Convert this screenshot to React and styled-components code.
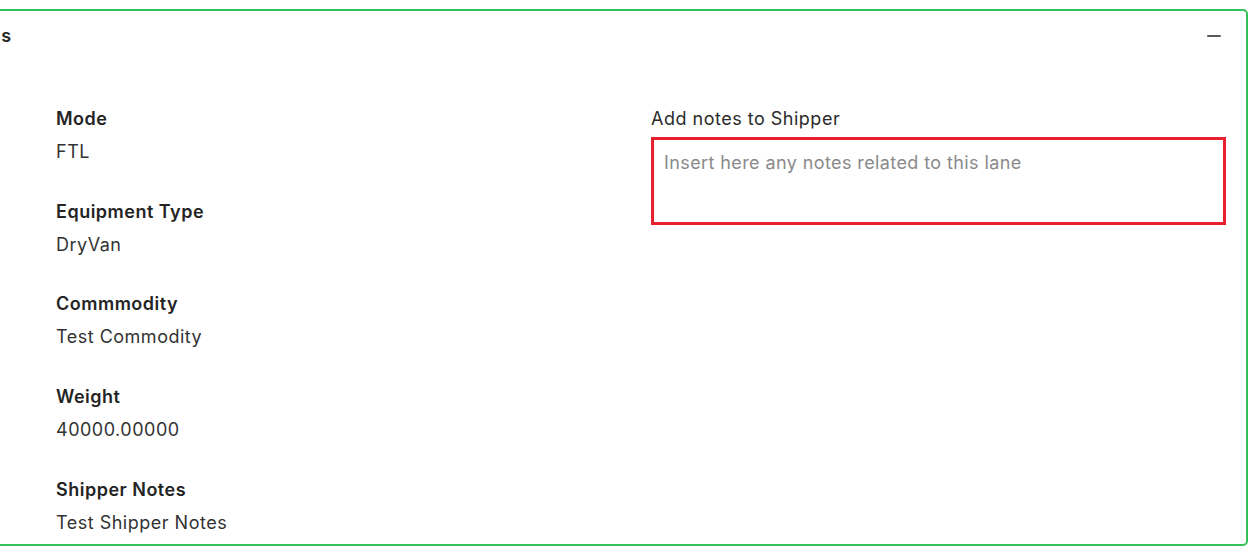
import React from "react";
import styled, { createGlobalStyle } from "styled-components";

const Global = createGlobalStyle`
  html, body { margin: 0; padding: 0; background: #fff; overflow: hidden; }
  body { font-family: Inter, "Noto Sans", "Liberation Sans", sans-serif; color: #2b2b2b; }
`;

const Page = styled.div`
  padding: 9px 9px 0 0;
`;

const Card = styled.section`
  margin-left: -106px;
  border: 2px solid #34c157;
  border-radius: 5px;
  height: 537px;
  box-sizing: border-box;
`;

const Header = styled.div`
  display: flex;
  align-items: center;
  justify-content: space-between;
  height: 49px;
  padding: 0 19px 0 2px;
`;

const Title = styled.h2`
  margin: 0;
  font-size: 18px;
  letter-spacing: 0.6px;
  font-weight: 600;
  color: #2b2b2b;
`;

const CollapseButton = styled.button`
  border: 0;
  background: none;
  padding: 6px 6px;
  display: flex;
  cursor: pointer;
`;

const MinusBar = styled.span`
  display: block;
  width: 14px;
  height: 2px;
  background: #5a5a5a;
  border-radius: 1px;
`;

const Body = styled.div`
  display: grid;
  grid-template-columns: 1fr 1fr;
  column-gap: 20px;
  padding: 47px 20px 0 160px;
`;

const Column = styled.div`
  display: flex;
  flex-direction: column;
  gap: 35.7px;
`;

const Field = styled.div`
  display: flex;
  flex-direction: column;
  gap: 9px;
`;

const Label = styled.div`
  font-size: 18px;
  letter-spacing: 0.5px;
  font-weight: 600;
  line-height: 24px;
  color: #242424;
`;

const Value = styled.div`
  font-size: 18px;
  letter-spacing: 0.5px;
  font-weight: 400;
  line-height: 24px;
  color: #333;
`;

const NotesLabel = styled.label`
  display: block;
  font-size: 18px;
  letter-spacing: 0.5px;
  font-weight: 400;
  line-height: 24px;
  color: #2b2b2b;
  margin-bottom: 6px;
`;

const NotesArea = styled.textarea`
  display: block;
  width: 100%;
  box-sizing: border-box;
  height: 88px;
  border: 3px solid #e8212f;
  border-radius: 0;
  padding: 11px 10px;
  font-family: inherit;
  font-size: 18px;
  letter-spacing: 0.4px;
  line-height: 24px;
  resize: none;
  outline: none;
  color: #333;
  &::placeholder { color: #8a8a8a; }
`;

const fields = [
  ["Mode", "FTL"],
  ["Equipment Type", "DryVan"],
  ["Commmodity", "Test Commodity"],
  ["Weight", "40000.00000"],
  ["Shipper Notes", "Test Shipper Notes"],
];

export default function App() {
  return (
    <Page>
      <Global />
      <Card>
        <Header>
          <Title>Lane Details</Title>
          <CollapseButton aria-label="Collapse">
            <MinusBar />
          </CollapseButton>
        </Header>
        <Body>
          <Column>
            {fields.map(([l, v]) => (
              <Field key={l}>
                <Label>{l}</Label>
                <Value>{v}</Value>
              </Field>
            ))}
          </Column>
          <div>
            <NotesLabel htmlFor="notes">Add notes to Shipper</NotesLabel>
            <NotesArea id="notes" placeholder="Insert here any notes related to this lane" />
          </div>
        </Body>
      </Card>
    </Page>
  );
}
